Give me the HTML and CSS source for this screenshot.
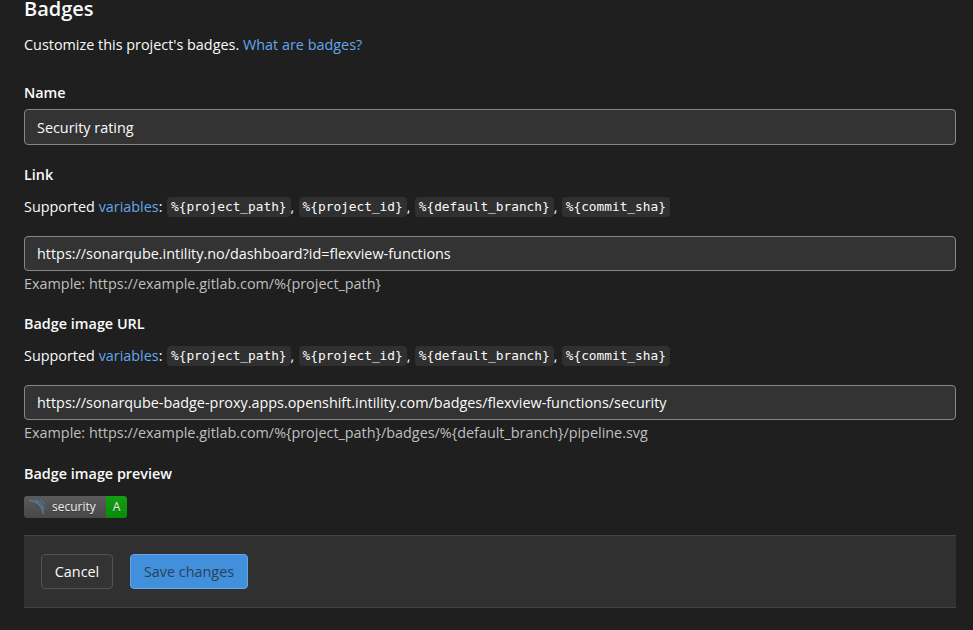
FILE: index.html
```
<!DOCTYPE html>
<html lang="en">
<head>
<meta charset="utf-8">
<title>Badges</title>
<link rel="stylesheet" href="styles.css">
</head>
<body>
<main class="settings">
  <h1 class="title"><span>Badges</span></h1>
  <p class="intro"><span>Customize this project's badges.</span> <a href="#">What are badges?</a></p>
  <form>
    <section class="group group-name">
      <label class="label" for="name">Name</label>
      <input class="field field-tall" id="name" type="text" value="Security rating">
    </section>
    <section class="group group-link">
      <label class="label" for="link">Link</label>
      <p class="help"><span class="lead">Supported <a href="#">variables</a>:</span><code>%{project_path}</code><span class="comma">,</span><code>%{project_id}</code><span class="comma">,</span><code>%{default_branch}</code><span class="comma">,</span><code>%{commit_sha}</code></p>
      <input class="field field-link" id="link" type="text" value="https://sonarqube.intility.no/dashboard?id=flexview-functions">
      <p class="example example-link">Example: https://example.gitlab.com/%{project_path}</p>
    </section>
    <section class="group group-image">
      <label class="label label-image" for="image">Badge image URL</label>
      <p class="help"><span class="lead">Supported <a href="#">variables</a>:</span><code>%{project_path}</code><span class="comma">,</span><code>%{project_id}</code><span class="comma">,</span><code>%{default_branch}</code><span class="comma">,</span><code>%{commit_sha}</code></p>
      <input class="field field-image" id="image" type="text" value="https://sonarqube-badge-proxy.apps.openshift.intility.com/badges/flexview-functions/security">
      <p class="example example-image">Example: https://example.gitlab.com/%{project_path}/badges/%{default_branch}/pipeline.svg</p>
    </section>
    <section class="group group-preview">
      <div class="label label-preview">Badge image preview</div>
      <div class="badge">
        <span class="badge-name">
          <svg class="sonar" viewBox="0 0 16 16" width="16" height="16" fill="none" stroke="#4b8fb8">
            <path d="M0.3 1.5C8 1.5 14 7.500 14.300 15.300" stroke-width="1.100"/>
            <path d="M6.300 0.700C10.500 2.300 13.800 5.800 15.300 10.200" stroke-width=".9"/>
            <path d="M11 0.500C13 1.700 14.700 3.500 15.800 5.600" stroke-width=".8"/>
          </svg>
          <span class="badge-text">security</span>
        </span>
        <span class="badge-grade">A</span>
      </div>
    </section>
    <footer class="actions">
      <button class="btn cancel" type="button"><span>Cancel</span></button>
      <button class="btn save" type="button"><span>Save changes</span></button>
    </footer>
  </form>
</main>
</body>
</html>
```
FILE: styles.css
```
* { box-sizing: border-box; }
body {
  margin: 0;
  height: 630px;
  overflow: hidden;
  background: #1f1f1f;
  color: #fafafa;
  font: 14.4px/24px "Open Sans", "Noto Sans", sans-serif;
}
p, h1 { margin: 0; white-space: nowrap; }
a { color: #63a6e9; text-decoration: none; }
.settings { padding: 0 17px 0 24px; }
.title { height: 33px; margin-top: -3px; padding-bottom: 9px; font-size: 20px; font-weight: 600; line-height: 24px; }
.title { height: 36px; }
.intro { height: 24px; }
form, .group { display: flex; flex-direction: column; }
.group-name { margin-top: 24px; }
.label { height: 24px; font-weight: 600; white-space: nowrap; }
.field {
  width: 100%;
  height: 35px;
  padding: 0 12px;
  border: 1px solid #868686;
  border-radius: 4px;
  background: #333;
  color: #fafafa;
  font: inherit;
}
.field-tall { height: 36px; margin-top: 4px; }
.group-link { margin-top: 18px; }
.help { display: flex; align-items: center; height: 24px; margin: 8px 0 17px; }
.lead { width: 143px; }
.comma { width: 8px; }
code {
  height: 20px;
  padding: 0 4px;
  border-radius: 4px;
  background: #303030;
  font: 12.800px/20px "DejaVu Sans Mono", monospace;
}
.example { height: 24px; margin-top: 1px; color: #bfbfbf; }
.group-image { margin-top: 16px; }
.group-image .help { margin-bottom: 17px; }
.group-preview { margin-top: 17px; }
.badge {
  display: flex;
  width: 103px;
  height: 22px;
  margin-top: 10px;
  border-radius: 3px;
  overflow: hidden;
  color: #eee;
  font-size: 12px;
  line-height: 21px;
  text-shadow: 0 1px 0 #0105;
}
.badge-name { display: flex; width: 82px; padding: 3px 0 0 5px; background: linear-gradient(#5b5b5b, #484848); }
.badge-text { margin: -3px 0 0 7px; }
.badge-grade { flex: 1; text-align: center; background: linear-gradient(#159d15, #078b07); }
.actions {
  display: flex;
  gap: 17px;
  height: 73px;
  margin-top: 17px;
  padding: 18px 17px;
  border: solid #444;
  border-width: 1px 0;
  background: #303030;
}
.btn { width: 72px; height: 35px; padding: 0; border: 1px solid #525252; border-radius: 4px; background: #333; color: #fafafa; font: inherit; }
.save { width: 118px; border-color: #63a6e9; background: #428fdc; color: #2b4256; }
```
